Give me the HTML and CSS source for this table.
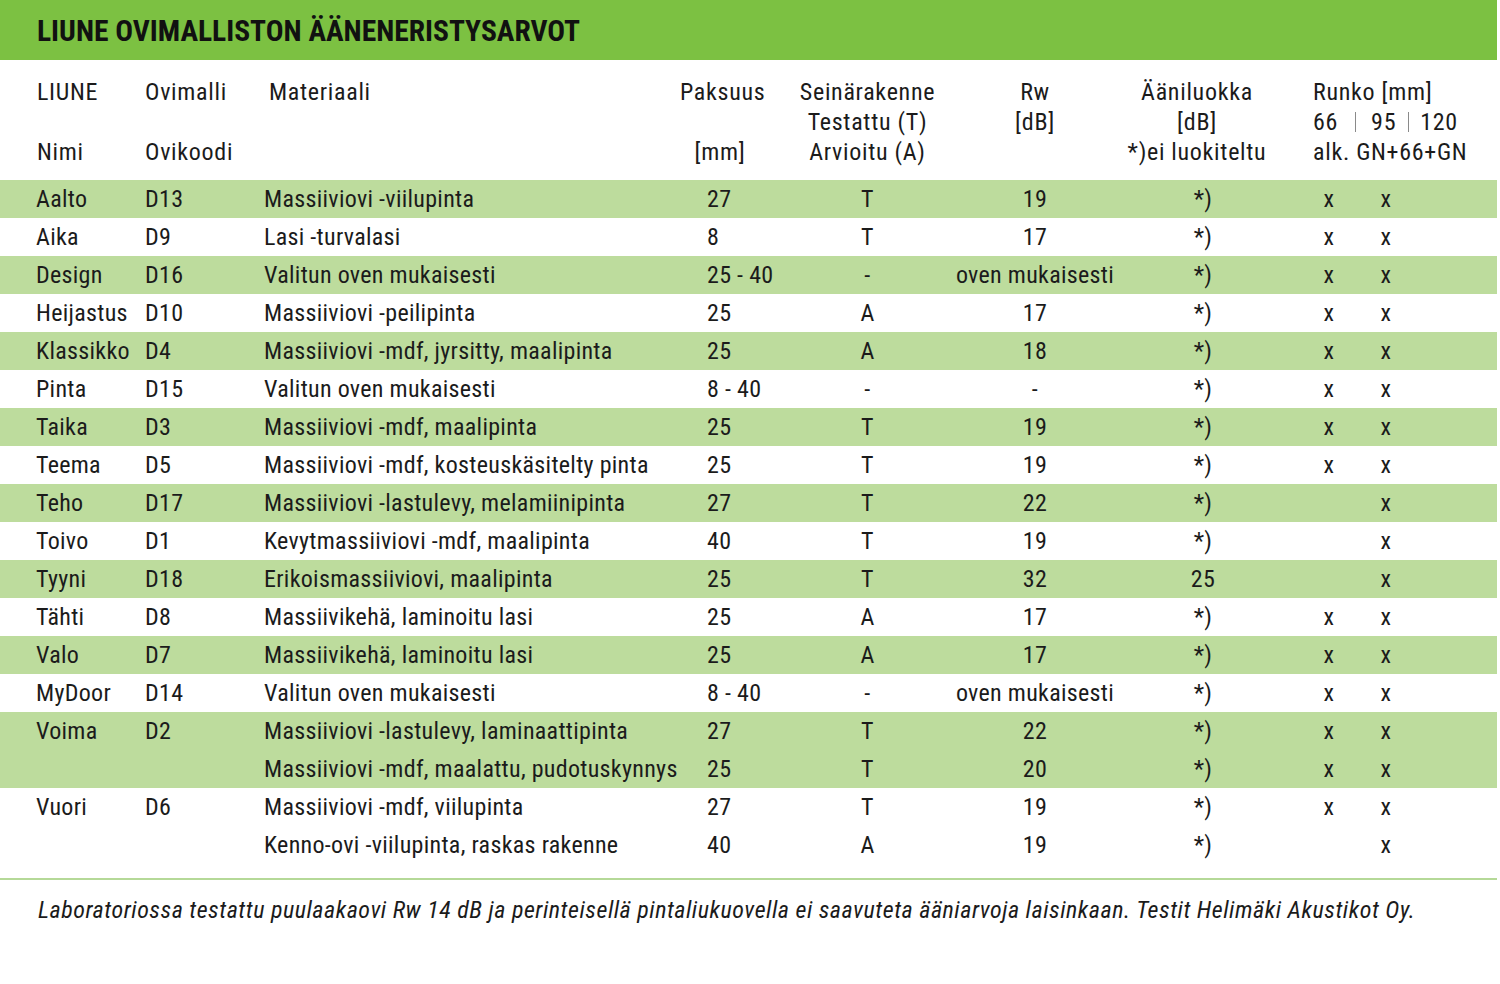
FILE: index.html
```html
<!DOCTYPE html>
<html lang="fi">
<head>
<meta charset="utf-8">
<title>Liune ovimalliston ääneneristysarvot</title>
<link rel="stylesheet" href="styles.css">
</head>
<body>
<div class="page">
  <header class="titlebar"><h1>LIUNE OVIMALLISTON ÄÄNENERISTYSARVOT</h1></header>
  <table class="tbl">
    <colgroup>
      <col class="c1"><col class="c2"><col class="c3"><col class="c4"><col class="c5"><col class="c6"><col class="c7"><col class="c8">
    </colgroup>
    <thead>
      <tr>
        <th class="h-name"><div>LIUNE</div><div>&nbsp;</div><div>Nimi</div></th>
        <th class="h-code"><div>Ovimalli</div><div>&nbsp;</div><div>Ovikoodi</div></th>
        <th class="h-mat"><div>Materiaali</div></th>
        <th class="h-thick"><div>Paksuus</div><div>&nbsp;</div><div>[mm]</div></th>
        <th class="h-ctr"><div>Seinärakenne</div><div>Testattu (T)</div><div>Arvioitu (A)</div></th>
        <th class="h-ctr"><div>Rw</div><div>[dB]</div></th>
        <th class="h-ctr h-class"><div>Ääniluokka</div><div>[dB]</div><div>*)ei luokiteltu</div></th>
        <th class="h-frame"><div>Runko [mm]</div><div class="sizes"><span>66</span><i class="sep"></i><span>95</span><i class="sep sep2"></i><span>120</span></div><div>alk. GN+66+GN</div></th>
      </tr>
    </thead>
    <tbody>
      <tr class="g"><td>Aalto</td><td>D13</td><td>Massiiviovi -viilupinta</td><td class="th">27</td><td class="ct">T</td><td class="ct">19</td><td class="cl">*)</td><td class="fr"><span>x</span><span>x</span></td></tr>
      <tr><td>Aika</td><td>D9</td><td>Lasi -turvalasi</td><td class="th">8</td><td class="ct">T</td><td class="ct">17</td><td class="cl">*)</td><td class="fr"><span>x</span><span>x</span></td></tr>
      <tr class="g"><td>Design</td><td>D16</td><td>Valitun oven mukaisesti</td><td class="th">25 - 40</td><td class="ct">-</td><td class="ct">oven mukaisesti</td><td class="cl">*)</td><td class="fr"><span>x</span><span>x</span></td></tr>
      <tr><td>Heijastus</td><td>D10</td><td>Massiiviovi -peilipinta</td><td class="th">25</td><td class="ct">A</td><td class="ct">17</td><td class="cl">*)</td><td class="fr"><span>x</span><span>x</span></td></tr>
      <tr class="g"><td>Klassikko</td><td>D4</td><td>Massiiviovi -mdf, jyrsitty, maalipinta</td><td class="th">25</td><td class="ct">A</td><td class="ct">18</td><td class="cl">*)</td><td class="fr"><span>x</span><span>x</span></td></tr>
      <tr><td>Pinta</td><td>D15</td><td>Valitun oven mukaisesti</td><td class="th">8 - 40</td><td class="ct">-</td><td class="ct">-</td><td class="cl">*)</td><td class="fr"><span>x</span><span>x</span></td></tr>
      <tr class="g"><td>Taika</td><td>D3</td><td>Massiiviovi -mdf, maalipinta</td><td class="th">25</td><td class="ct">T</td><td class="ct">19</td><td class="cl">*)</td><td class="fr"><span>x</span><span>x</span></td></tr>
      <tr><td>Teema</td><td>D5</td><td>Massiiviovi -mdf, kosteuskäsitelty pinta</td><td class="th">25</td><td class="ct">T</td><td class="ct">19</td><td class="cl">*)</td><td class="fr"><span>x</span><span>x</span></td></tr>
      <tr class="g"><td>Teho</td><td>D17</td><td>Massiiviovi -lastulevy, melamiinipinta</td><td class="th">27</td><td class="ct">T</td><td class="ct">22</td><td class="cl">*)</td><td class="fr"><span class="no">x</span><span>x</span></td></tr>
      <tr><td>Toivo</td><td>D1</td><td>Kevytmassiiviovi -mdf, maalipinta</td><td class="th">40</td><td class="ct">T</td><td class="ct">19</td><td class="cl">*)</td><td class="fr"><span class="no">x</span><span>x</span></td></tr>
      <tr class="g"><td>Tyyni</td><td>D18</td><td>Erikoismassiiviovi, maalipinta</td><td class="th">25</td><td class="ct">T</td><td class="ct">32</td><td class="cl">25</td><td class="fr"><span class="no">x</span><span>x</span></td></tr>
      <tr><td>Tähti</td><td>D8</td><td>Massiivikehä, laminoitu lasi</td><td class="th">25</td><td class="ct">A</td><td class="ct">17</td><td class="cl">*)</td><td class="fr"><span>x</span><span>x</span></td></tr>
      <tr class="g"><td>Valo</td><td>D7</td><td>Massiivikehä, laminoitu lasi</td><td class="th">25</td><td class="ct">A</td><td class="ct">17</td><td class="cl">*)</td><td class="fr"><span>x</span><span>x</span></td></tr>
      <tr><td>MyDoor</td><td>D14</td><td>Valitun oven mukaisesti</td><td class="th">8 - 40</td><td class="ct">-</td><td class="ct">oven mukaisesti</td><td class="cl">*)</td><td class="fr"><span>x</span><span>x</span></td></tr>
      <tr class="g"><td>Voima</td><td>D2</td><td>Massiiviovi -lastulevy, laminaattipinta</td><td class="th">27</td><td class="ct">T</td><td class="ct">22</td><td class="cl">*)</td><td class="fr"><span>x</span><span>x</span></td></tr>
      <tr class="g"><td></td><td></td><td>Massiiviovi -mdf, maalattu, pudotuskynnys</td><td class="th">25</td><td class="ct">T</td><td class="ct">20</td><td class="cl">*)</td><td class="fr"><span>x</span><span>x</span></td></tr>
      <tr><td>Vuori</td><td>D6</td><td>Massiiviovi -mdf, viilupinta</td><td class="th">27</td><td class="ct">T</td><td class="ct">19</td><td class="cl">*)</td><td class="fr"><span>x</span><span>x</span></td></tr>
      <tr><td></td><td></td><td>Kenno-ovi -viilupinta, raskas rakenne</td><td class="th">40</td><td class="ct">A</td><td class="ct">19</td><td class="cl">*)</td><td class="fr"><span class="no">x</span><span>x</span></td></tr>
    </tbody>
  </table>
  <p class="note">Laboratoriossa testattu puulaakaovi Rw 14 dB ja perinteisellä pintaliukuovella ei saavuteta ääniarvoja laisinkaan. Testit Helimäki Akustikot Oy.</p>
</div>
</body>
</html>
```

FILE: styles.css
```css
html, body {
  margin: 0;
  padding: 0;
  background: #ffffff;
}
body {
  font-family: "Roboto Condensed", "Liberation Sans Narrow", "DejaVu Sans Condensed", "DejaVu Sans", sans-serif;
  font-stretch: condensed;
  color: #1b1b1b;
}
.page {
  width: 1497px;
}
.titlebar {
  background: #7cc142;
  height: 60px;
  display: flex;
  align-items: center;
  padding-left: 37px;
}
.titlebar h1 {
  margin: 0;
  font-size: 29.5px;
  font-weight: bold;
  color: #111;
  letter-spacing: 0;
  line-height: 1;
  padding-top: 4px;
}
.tbl {
  width: 1497px;
  table-layout: fixed;
  border-collapse: collapse;
  font-size: 24px;
  letter-spacing: 0.3px;
}
.c1 { width: 145px; }
.c2 { width: 119px; }
.c3 { width: 416px; }
.c4 { width: 100px; }
.c5 { width: 175px; }
.c6 { width: 160px; }
.c7 { width: 170px; }
.c8 { width: 212px; }

.tbl th {
  font-weight: normal;
  text-align: left;
  vertical-align: top;
  padding: 17px 0 13px 0;
  line-height: 30px;
  white-space: nowrap;
  letter-spacing: 0.7px;
}
.tbl th div { height: 30px; }
.h-name { padding-left: 37px !important; }
.h-mat { padding-left: 5px !important; }
.h-thick { text-align: center !important; padding-right: 20px !important; }
.h-ctr { text-align: center !important; }
.h-class { padding-right: 6px !important; }
.h-frame { padding-left: 28px !important; }
.sizes { display: flex; align-items: center; }
.sizes .sep {
  display: inline-block;
  width: 1px;
  height: 20px;
  background: #8a8a8a;
  margin: 0 15px 0 17px;
}
.sizes .sep2 { margin: 0 11px 0 12px; }

.tbl td {
  height: 38px;
  padding: 0;
  line-height: 38px;
  white-space: nowrap;
  vertical-align: middle;
}
.tbl tr.g td { background: #bddc9d; }
.tbl td:first-child { padding-left: 36px; }
.tbl td.th { padding-left: 27px; }
.tbl td.ct { text-align: center; }
.tbl td.cl { text-align: center; padding-left: 6px; }
.tbl td.fr { padding-left: 37px; }
.fr span {
  display: inline-block;
  width: 14px;
  text-align: center;
  margin-right: 43px;
}
.fr span.no { visibility: hidden; }

.note {
  margin: 14px 0 0 0;
  border-top: 2px solid #b5d998;
  padding: 15px 0 0 38px;
  font-size: 24px;
  line-height: 30px;
  font-style: italic;
  letter-spacing: 0.52px;
}
```
